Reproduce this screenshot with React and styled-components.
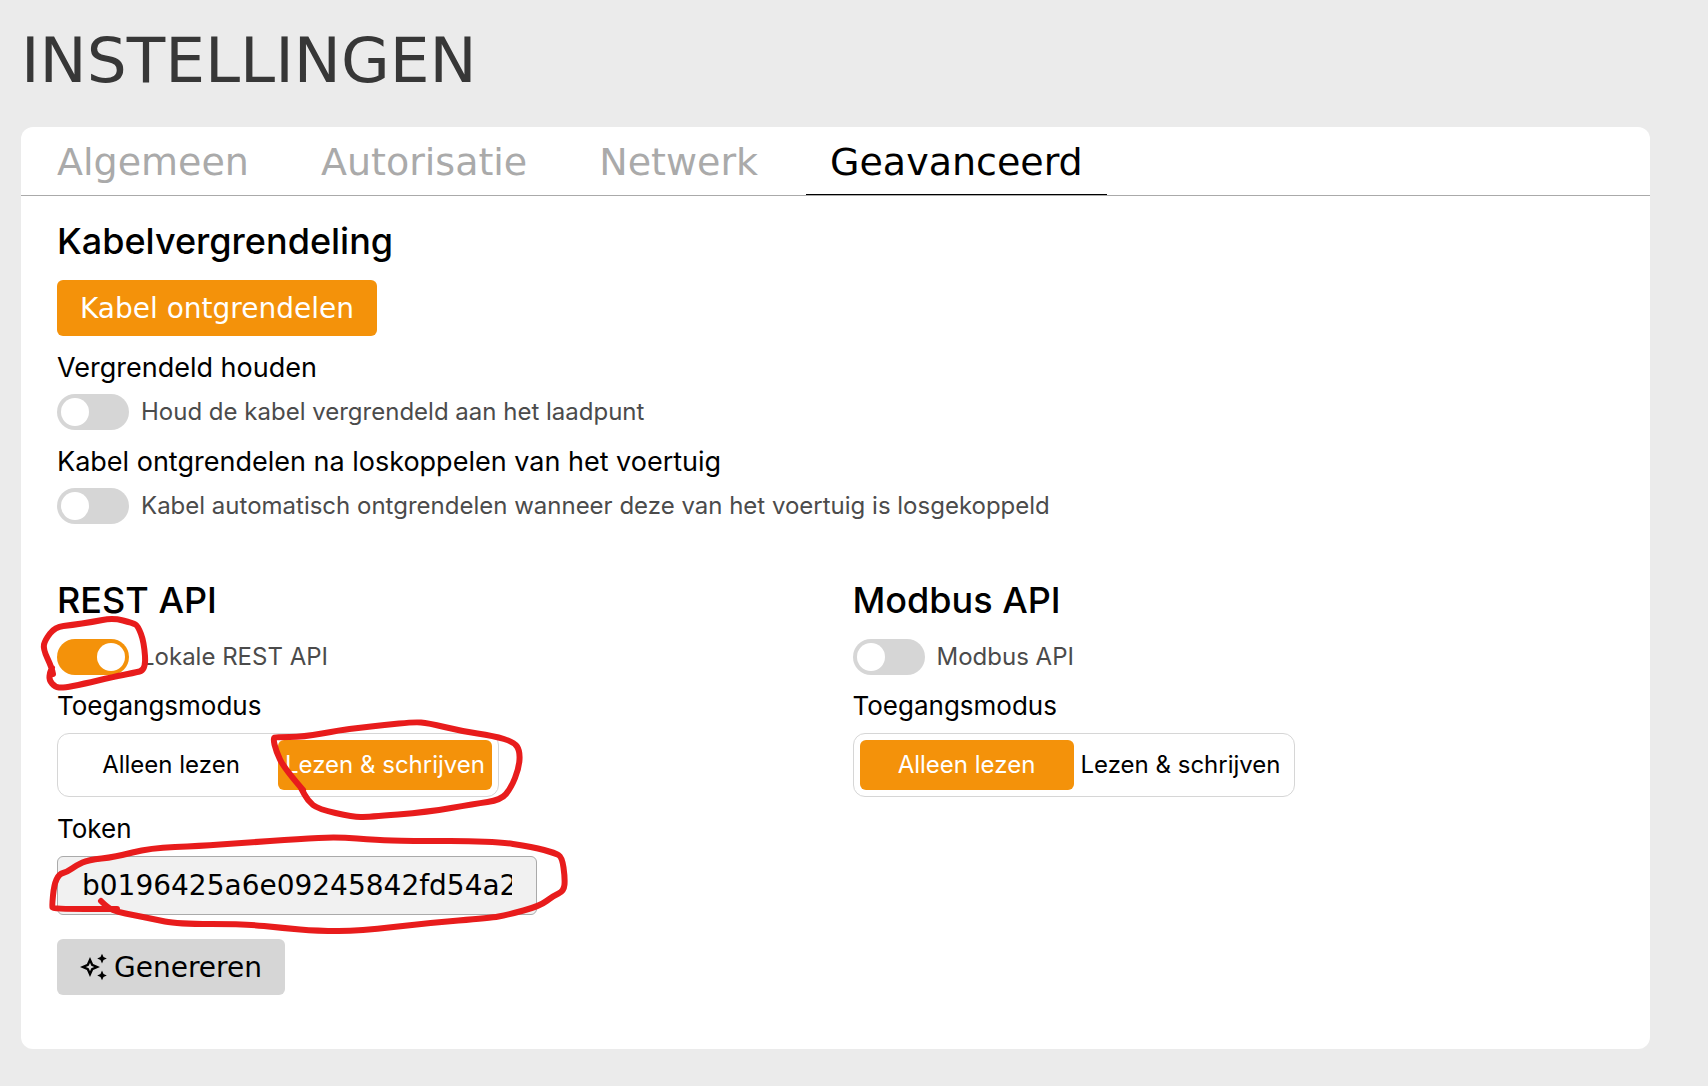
import { useState } from "react";
import styled, { createGlobalStyle } from "styled-components";

const TABS = ["Algemeen", "Autorisatie", "Netwerk", "Geavanceerd"];
const MODES = ["Alleen lezen", "Lezen & schrijven"];

/* Pen strokes, relative to the top left of the control they circle */
const SWITCH_PEN = [
  [-4, 35], [-5, 29], [-14, 10], [-12, 1], [-2, -12], [15, -14], [35, -17], [56, -21],
  [76, -16], [81, -13], [87, 3], [89, 31], [76, 34], [56, 38], [26, 45], [6, 49],
  [-2, 48], [-8, 41], [-7, 33], [-5, 29],
];

const MODE_PEN = [
  [245, 56], [226, 34], [218, 17], [215, 4], [218, 3], [245, 3], [283, -4], [300, -6],
  [326, -9], [356, -12], [370, -11], [403, -3], [436, 2], [456, 8], [462, 17], [461, 34],
  [453, 54], [443, 66], [416, 70], [370, 78], [310, 83], [295, 83], [260, 75], [250, 67],
  [243, 54],
];

const TOKEN_PEN = [
  [44, 45], [51, 52], [61, 56], [76, 59], [96, 63], [120, 68], [188, 68], [226, 72],
  [260, 75], [303, 75], [370, 67], [433, 62], [450, 59], [483, 50], [496, 40], [507, 35],
  [508, 22], [505, 1], [498, -3], [476, -9], [436, -15], [350, -15], [320, -16], [280, -19],
  [243, -17], [183, -13], [143, -10], [93, -8], [58, 1], [31, 4], [20, 9], [10, 16],
  [2, 18], [-3, 29], [-5, 50], [-4, 53], [60, 53],
];

// rounds the corners by curving through the midpoint of every segment
function penPath(points) {
  const [first, ...rest] = points;
  const last = rest[rest.length - 1];
  const curves = rest.slice(0, -1).map(([x, y], i) => {
    const [nx, ny] = rest[i + 1];
    return `Q${x} ${y} ${(x + nx) / 2} ${(y + ny) / 2}`;
  });
  return `M${first.join(" ")} ${curves.join(" ")} L${last.join(" ")}`;
}

function PenMark({ points }) {
  return (
    <Pen width="1" height="1" aria-hidden="true">
      <path d={penPath(points)} />
    </Pen>
  );
}

function Toggle({ id, label, checked, onChange }) {
  return (
    <ToggleRow>
      <Switch
        id={id}
        type="checkbox"
        checked={checked}
        onChange={(e) => onChange(e.target.checked)}
      />
      <ToggleText htmlFor={id}>{label}</ToggleText>
    </ToggleRow>
  );
}

function AccessMode({ name, value, onChange, children }) {
  return (
    <Group>
      <Legend>Toegangsmodus</Legend>
      <Segments>
        {MODES.map((mode) => (
          <Segment key={mode}>
            <input
              type="radio"
              name={name}
              checked={value === mode}
              onChange={() => onChange(mode)}
            />
            <span>{mode}</span>
          </Segment>
        ))}
        {children}
      </Segments>
    </Group>
  );
}

function SparkleIcon() {
  return (
    <svg width="28" height="28" viewBox="0 0 28 28" fill="currentColor" aria-hidden="true">
      <path
        fillRule="evenodd"
        d="M10 4l3.1 6.9L20 14l-6.9 3.1L10 24l-3.1-6.9L0 14l6.9-3.1zM10 9.8l-1.3 2.9L5.8 14l2.9 1.3L10 18.2l1.3-2.9L14.2 14l-2.9-1.3z"
      />
      <path d="M22 .8l1.5 3.3L26.8 5.6l-3.3 1.5L22 10.4l-1.5-3.3-3.3-1.5 3.3-1.5z" />
      <path d="M22 17.6l1.5 3.3 3.3 1.5-3.3 1.5L22 27.2l-1.5-3.3-3.3-1.5 3.3-1.5z" />
    </svg>
  );
}

function App() {
  const [tab, setTab] = useState("Geavanceerd");
  const [keepLocked, setKeepLocked] = useState(false);
  const [autoUnlock, setAutoUnlock] = useState(false);
  const [restOn, setRestOn] = useState(true);
  const [restMode, setRestMode] = useState(MODES[1]);
  const [modbusOn, setModbusOn] = useState(false);
  const [modbusMode, setModbusMode] = useState(MODES[0]);

  return (
    <Page>
      <GlobalStyle />
      <Title>INSTELLINGEN</Title>

      <Card>
        <TabBar role="tablist">
          {TABS.map((name) => (
            <Tab
              key={name}
              type="button"
              role="tab"
              aria-selected={tab === name}
              $active={tab === name}
              onClick={() => setTab(name)}
            >
              {name}
            </Tab>
          ))}
        </TabBar>

        <Content>
          <section>
            <Heading>Kabelvergrendeling</Heading>
            <Button type="button" $primary>
              Kabel ontgrendelen
            </Button>
            <SubHeading>Vergrendeld houden</SubHeading>
            <Toggle
              id="keep-locked"
              label="Houd de kabel vergrendeld aan het laadpunt"
              checked={keepLocked}
              onChange={setKeepLocked}
            />
            <SubHeading>Kabel ontgrendelen na loskoppelen van het voertuig</SubHeading>
            <Toggle
              id="auto-unlock"
              label="Kabel automatisch ontgrendelen wanneer deze van het voertuig is losgekoppeld"
              checked={autoUnlock}
              onChange={setAutoUnlock}
            />
          </section>

          <Columns>
            <section>
              <Heading>REST API</Heading>
              <Marked>
                <Toggle
                  id="rest-api"
                  label="Lokale REST API"
                  checked={restOn}
                  onChange={setRestOn}
                />
                <PenMark points={SWITCH_PEN} />
              </Marked>
              <AccessMode name="rest-mode" value={restMode} onChange={setRestMode}>
                <PenMark points={MODE_PEN} />
              </AccessMode>
              <Label htmlFor="token">Token</Label>
              <Marked>
                <TokenInput
                  id="token"
                  type="text"
                  readOnly
                  value="b0196425a6e09245842fd54a2"
                />
                <PenMark points={TOKEN_PEN} />
              </Marked>
              <Actions>
                <Button type="button">
                  <SparkleIcon />
                  Genereren
                </Button>
              </Actions>
            </section>

            <section>
              <Heading>Modbus API</Heading>
              <Toggle
                id="modbus-api"
                label="Modbus API"
                checked={modbusOn}
                onChange={setModbusOn}
              />
              <AccessMode name="modbus-mode" value={modbusMode} onChange={setModbusMode} />
            </section>
          </Columns>
        </Content>
      </Card>
    </Page>
  );
}

export default App;

const displayFont = `"DejaVu Sans", sans-serif`;

const GlobalStyle = createGlobalStyle`
  *,
  *::before {
    box-sizing: border-box;
  }

  body {
    margin: 0;
    background: #ebebeb;
    color: #000;
    font-family: Inter, sans-serif;
  }

  button,
  input {
    font-family: inherit;
  }
`;

const Page = styled.main`
  padding: 25px 58px 36px 21px;
`;

const Title = styled.h1`
  margin: 0 0 30px;
  color: #373737;
  font-family: ${displayFont};
  font-size: 63px;
  font-weight: 400;
  line-height: 72px;
`;

const Card = styled.div`
  background: #fff;
  border-radius: 12px;
`;

const TabBar = styled.div`
  display: flex;
  gap: 24px;
  height: 69px;
  padding: 0 12px;
  border-bottom: 1px solid #aaa;
`;

const Tab = styled.button`
  padding: 2px 24px 0;
  border: 0;
  border-bottom: 1px solid ${({ $active }) => ($active ? "#000" : "transparent")};
  background: none;
  color: ${({ $active }) => ($active ? "#000" : "#aaa")};
  font-family: ${displayFont};
  font-size: 38px;
  cursor: pointer;
`;

const Content = styled.div`
  padding: 21px 36px 54px;
`;

const Columns = styled.div`
  display: grid;
  grid-template-columns: 1fr 1fr;
  gap: 34px;
  margin-top: 52px;
`;

const Heading = styled.h2`
  margin: 0 0 15px;
  font-size: 36px;
  font-weight: 500;
  line-height: 48px;
`;

const SubHeading = styled.h3`
  margin: 16px 0 10px;
  font-size: 27px;
  font-weight: 400;
  line-height: 32px;
`;

const Label = styled.label`
  display: block;
  margin: 16px 0 11px;
  font-size: 26px;
  line-height: 32px;
`;

const Button = styled.button`
  display: inline-flex;
  align-items: center;
  gap: 6px;
  height: 56px;
  padding: 0 23px;
  border: 0;
  border-radius: 6px;
  background: ${({ $primary }) => ($primary ? "#f4920a" : "#d6d6d6")};
  color: ${({ $primary }) => ($primary ? "#fff" : "#000")};
  font-family: ${displayFont};
  font-size: 28px;
  vertical-align: top;
  cursor: pointer;
`;

const Actions = styled.div`
  margin-top: 24px;
`;

const ToggleRow = styled.div`
  display: flex;
  align-items: center;
  gap: 12px;
`;

const ToggleText = styled.label`
  color: #4b4b4b;
  font-size: 24px;
  line-height: 36px;
`;

const Switch = styled.input`
  display: flex;
  align-items: center;
  flex: none;
  width: 72px;
  height: 36px;
  margin: 0;
  padding: 0 4px;
  border-radius: 18px;
  background: #d6d6d6;
  appearance: none;
  cursor: pointer;

  &::before {
    content: "";
    width: 28px;
    height: 28px;
    border-radius: 50%;
    background: #fff;
  }

  &:checked {
    justify-content: flex-end;
    background: #f4920a;
  }
`;

const Group = styled.fieldset`
  min-width: 0;
  margin: 15px 0 0;
  padding: 0;
  border: 0;
`;

const Legend = styled.legend`
  margin-bottom: 11px;
  padding: 0;
  font-size: 26px;
  line-height: 32px;
`;

const Segments = styled.div`
  position: relative;
  display: grid;
  grid-template-columns: 1fr 1fr;
  width: 442px;
  max-width: 100%;
  padding: 6px;
  border: 1px solid #d6d6d6;
  border-radius: 12px;
`;

const Segment = styled.label`
  font-size: 24px;
  line-height: 50px;
  text-align: center;
  white-space: nowrap;
  cursor: pointer;

  input {
    position: absolute;
    opacity: 0;
  }

  span {
    display: block;
    border-radius: 6px;
  }

  input:checked + span {
    background: #f4920a;
    color: #fff;
  }
`;

const Marked = styled.div`
  position: relative;
`;

const TokenInput = styled.input`
  display: block;
  width: 480px;
  max-width: 100%;
  height: 59px;
  padding: 0 24px;
  border: 1px solid #aaa;
  border-radius: 6px;
  background: #f1f1f1;
  color: #000;
  font-family: ${displayFont};
  font-size: 28px;
`;

const Pen = styled.svg`
  position: absolute;
  top: 0;
  left: 0;
  overflow: visible;
  pointer-events: none;

  path {
    fill: none;
    stroke: #e81c1c;
    stroke-width: 6px;
    stroke-linecap: round;
    stroke-linejoin: round;
  }
`;
